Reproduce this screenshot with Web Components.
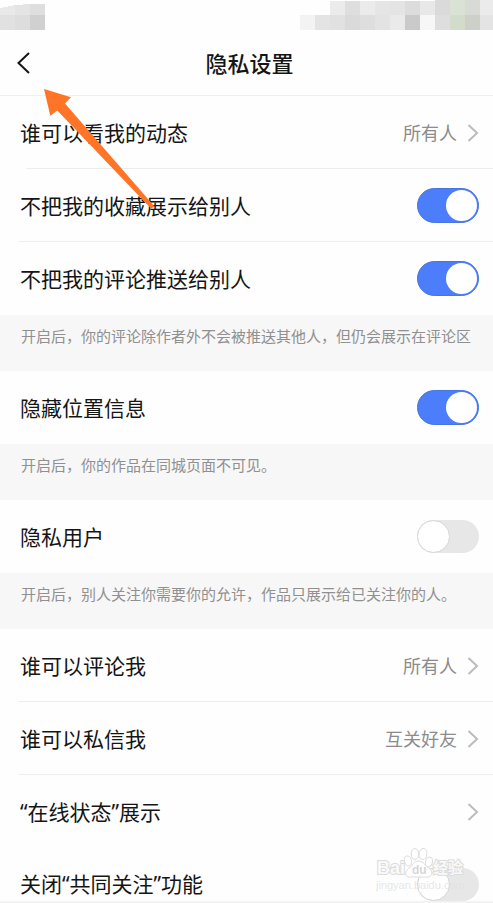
<!DOCTYPE html>
<html lang="zh-CN">
<head>
<meta charset="utf-8">
<meta name="viewport" content="width=device-width, initial-scale=1">
<title>隐私设置</title>
<style>
  html { background: #fefefe; }
  body { margin: 0; font-family: "Noto Sans", "Noto Sans CJK SC", sans-serif; color: #151515; }
</style>
</head>
<body>
<privacy-page></privacy-page>

<script>
const define = (name, html, setup) => {
  const template = document.createElement("template");
  template.innerHTML = html;
  customElements.define(name, class extends HTMLElement {
    constructor() {
      super();
      this.attachShadow({ mode: "open" }).append(template.content.cloneNode(true));
    }
    connectedCallback() { if (setup) setup(this, this.shadowRoot); }
  });
};

const cells = (x, y, h, colours) => colours.map((c, i) =>
  `<rect x="${x + i * 15}" y="${y}" width="15" height="${h}" fill="#${c}"/>`).join("");

define("status-bar", `
<style>
  :host { display: flex; justify-content: space-between; height: 30px; }
  svg { display: block; shape-rendering: crispEdges; }
</style>
<svg width="45" height="30" aria-hidden="true">
  <path d="M0 8L15 5V15H0Z" fill="#e9e9e9"/><path d="M15 5L30 4V15H15Z" fill="#e4e4e4"/><path d="M30 4H45V15H30Z" fill="#dedede"/>
  ${cells(0, 15, 15, ["e1e1e1", "dddddd", "d0d0d0"])}
</svg>
<svg width="193" height="30" aria-hidden="true">
  ${cells(30, 1, 14, ["ebebeb", "dedede", "ebebeb", "e5e5e5", "e4e4e4", "dcdcdc", "e8e8e8"])}
  ${cells(135, 0, 15, ["dadada", "dae1d5", "d8dad6", "ebebeb"])}
  ${cells(0, 15, 15, ["f3f3f3", "e4e4e4", "e1e1e1", "dadada", "dedede", "e3e3e3", "eaeaea", "cacaca", "f7f7f7", "dedede", "d3dccb", "cdd0c9", "e4e4e4"])}
</svg>`);

define("nav-bar", `
<style>
  :host { display: grid; grid-template-columns: 54px 1fr 48px; align-items: center; height: 66px;
    box-sizing: border-box; border-bottom: 1px solid #f0f0f0; }
  button { display: flex; justify-content: flex-start; padding: 0 0 0 16px; border: 0; background: none; color: #151515; }
  h1 { margin: 0; font-size: 22px; line-height: 32px; font-weight: 500; text-align: center; }
</style>
<button type="button" aria-label="返回">
  <svg width="14" height="24" viewBox="0 0 14 24" fill="none" stroke="currentColor" stroke-width="2"><path d="M13 2L2.500 12L13 22"/></svg>
</button>
<h1><slot></slot></h1>`);

define("setting-group", `
<style>:host { display: block; }</style>
<slot></slot>`);

const rowStyle = `
  :host { display: block; --line: #ededed; }
  .row { display: flex; align-items: center; justify-content: space-between; box-sizing: border-box;
    width: 100%; height: 73px; padding: 0 14px 0 20px; }
  .line { height: 1px; margin: -1px 0 0 19px; background: var(--line); }
  :host([divider="short"]) .line { margin-left: 26px; }
  :host(:not([divider])) .line { display: none; }
  .name { font-size: 21px; line-height: 32px; }`;

define("link-row", `
<style>${rowStyle}
  a { color: inherit; text-decoration: none; }
  .end { display: flex; align-items: center; gap: 10px; color: #8c8c8c; font-size: 18px; line-height: 28px; }
  svg { display: block; }
</style>
<a class="row" href="#">
  <span class="name"><slot></slot></span>
  <span class="end"><slot name="value"></slot>
    <svg width="12" height="18" viewBox="0 0 12 18" fill="none" stroke="#bcbcbc" stroke-width="2" aria-hidden="true"><path d="M1.500 1L10 9L1.500 17"/></svg>
  </span>
</a>
<div class="line"></div>`);

define("switch-row", `
<style>${rowStyle}
  :host([last]) .row { height: 53px; align-items: flex-start; padding-top: 20px; }
  input { appearance: none; flex: none; display: flex; align-items: center; box-sizing: border-box;
    width: 62px; height: 35px; margin: 0; padding: 0 2px; border-radius: 18px; background: #e7e7e7; }
  input::before { content: ""; box-sizing: border-box; width: 31px; height: 31px; border-radius: 50%; background: #fff; }
  input:checked { justify-content: flex-end; background: #4c7dfa; border: 1px solid #4675df; padding: 0 1px; }
  input:not(:checked) { height: 33px; padding: 0; }
  input:not(:checked)::before { width: 33px; height: 33px; border: 1px solid #d6d6d6; }
</style>
<div class="row">
  <label class="name" for="toggle"><slot></slot></label>
  <input id="toggle" type="checkbox" role="switch">
</div>
<div class="line"></div>`, (host, root) => {
  root.querySelector("input").checked = host.hasAttribute("checked");
});

define("setting-note", `
<style>
  :host { display: block; box-sizing: border-box; min-height: 56px; padding: 9px 0 23px 21px;
    background: #f7f7f7; color: #909090; font-size: 15px; line-height: 24px; }
</style>
<slot></slot>`);

define("pointer-arrow", `
<style>:host { position: absolute; left: 43px; top: 88px; pointer-events: none; } svg { display: block; }</style>
<svg width="113" height="122" viewBox="43 88 113 122" aria-hidden="true">
  <path d="M44 89L71 97.300L65 103.500L154.500 206.500L151 208.500L57.300 110.500L50.300 115.700Z" fill="#ff7426"/>
</svg>`);

define("site-watermark", `
<style>
  :host { position: absolute; right: 23px; bottom: 7px; pointer-events: none; }
  svg { display: block; }
  text { font-family: "Liberation Sans", "Noto Sans CJK SC", sans-serif; paint-order: stroke; }
</style>
<svg width="98" height="48" viewBox="3 0 98 48" fill="#fff" fill-opacity=".85" stroke="#dcdcdc" stroke-width="1" aria-hidden="true">
  <ellipse cx="39" cy="15" rx="3.500" ry="5" transform="rotate(-12 39 15)"/>
  <ellipse cx="46" cy="8" rx="3.800" ry="5.500"/>
  <ellipse cx="54" cy="8" rx="3.800" ry="5.500" transform="rotate(8 54 8)"/>
  <ellipse cx="60" cy="16" rx="3.500" ry="5" transform="rotate(15 60 16)"/>
  <path d="M49.500 15C44 15 44 20 40 22C34 27 37 32 42 31H57C63 32 65 26 60 22C56 20 55 15 49.500 15Z"/>
  <text x="8" y="28" font-size="18" font-weight="700" stroke-width="2">Bai</text>
  <text x="43" y="28" font-size="12" font-weight="700" fill="#cfcfcf" stroke="none">du</text>
  <text x="64" y="27" font-size="15" font-weight="700" stroke-width="2">经验</text>
  <text x="7" y="43" font-size="11" fill="#e2e2e2" stroke="none">jingyan.baidu.com</text>
</svg>`);

define("privacy-page", `
<style>
  :host { display: block; position: relative; border-bottom: 2px solid #f3f3f3; }
</style>
<status-bar></status-bar>
<nav-bar>隐私设置</nav-bar>
<setting-group>
  <link-row divider="short">谁可以看我的动态<span slot="value">所有人</span></link-row>
  <switch-row divider checked>不把我的收藏展示给别人</switch-row>
  <switch-row checked>不把我的评论推送给别人</switch-row>
  <setting-note>开启后，你的评论除作者外不会被推送其他人，但仍会展示在评论区</setting-note>
</setting-group>
<setting-group>
  <switch-row checked>隐藏位置信息</switch-row>
  <setting-note>开启后，你的作品在同城页面不可见。</setting-note>
</setting-group>
<setting-group>
  <switch-row>隐私用户</switch-row>
  <setting-note>开启后，别人关注你需要你的允许，作品只展示给已关注你的人。</setting-note>
</setting-group>
<setting-group>
  <link-row divider>谁可以评论我<span slot="value">所有人</span></link-row>
  <link-row divider>谁可以私信我<span slot="value">互关好友</span></link-row>
  <link-row>“在线状态”展示</link-row>
  <switch-row last>关闭“共同关注”功能</switch-row>
</setting-group>
<site-watermark></site-watermark>
<pointer-arrow></pointer-arrow>`);
</script>
</body>
</html>
